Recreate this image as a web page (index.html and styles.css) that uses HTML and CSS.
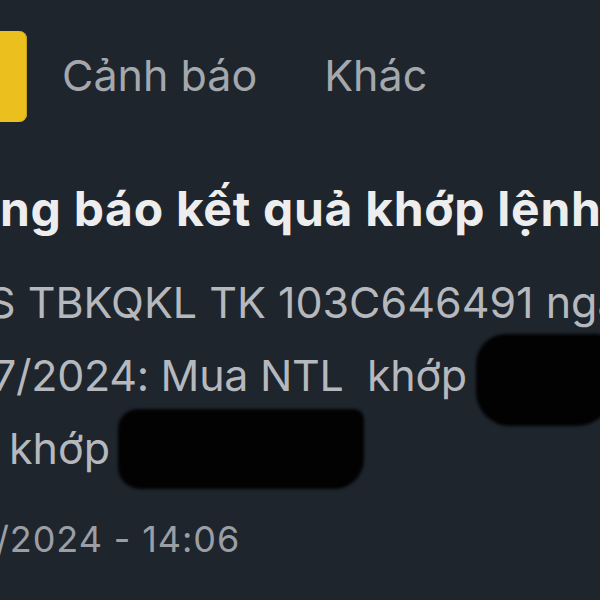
FILE: index.html
```html
<!DOCTYPE html>
<html lang="vi">
<head>
<meta charset="utf-8">
<link rel="stylesheet" href="styles.css">
</head>
<body>
<div class="screen">
  <div class="tabs">
    <div class="tab-active"></div>
    <div class="tab">Cảnh báo</div>
    <div class="tab">Khác</div>
  </div>
  <div class="title">ng báo kết quả khớp lệnh</div>
  <div class="body">
    <div class="line l1">S TBKQKL TK 103C646491 ngày</div>
    <div class="line l2">7/2024: Mua NTL&nbsp; khớp <span class="hidden">9</span></div>
    <div class="line l3">khớp <span class="hidden">9</span></div>
    <div class="blob b1"></div>
    <div class="blob b2"></div>
  </div>
  <div class="date">/2024 - 14:06</div>
</div>
</body>
</html>
```
FILE: styles.css
```css
html, body {
  margin: 0;
  padding: 0;
  background: #1e252d;
}
.screen {
  width: 600px;
  height: 600px;
  overflow: hidden;
  background: #1e252d;
  font-family: Inter, Roboto, sans-serif;
  position: relative;
}
.tabs {
  display: flex;
  align-items: center;
  margin-top: 31px;
  height: 91px;
}
.tab-active {
  width: 27px;
  height: 91px;
  background: #eabf1e;
  border-radius: 0 8px 8px 0;
  box-shadow: inset -1px 0 0 #c9a21a;
}
.tab {
  font-size: 43px;
  color: #a4a8ad;
  margin-left: 35px;
  margin-top: -3px;
}
.tab + .tab {
  margin-left: 67px;
}
.title {
  margin-top: 59px;
  font-size: 48px;
  line-height: 56px;
  font-weight: 700;
  letter-spacing: 0.7px;
  color: #ededee;
  white-space: nowrap;
}
.body {
  position: relative;
  margin-top: 29px;
  font-size: 43px;
  line-height: 73px;
  color: #b5b8bc;
}
.line {
  white-space: nowrap;
}
.l1 { margin-left: -12px; }
.l2 { margin-left: -8px; letter-spacing: -0.3px; }
.l3 { margin-left: 9px; }
.hidden { color: #6a6d70; }
.blob {
  position: absolute;
  background: #020203;
  filter: blur(1.5px);
}
.b1 {
  left: 476px;
  top: 68px;
  width: 140px;
  height: 92px;
  border-radius: 30px 20px 40px 34px;
}
.b2 {
  left: 118px;
  top: 143px;
  width: 246px;
  height: 80px;
  border-radius: 20px 10px 30px 22px;
}
.date {
  margin-top: 32px;
  margin-left: -4px;
  font-size: 36px;
  line-height: 44px;
  letter-spacing: 0.9px;
  color: #9b9fa5;
  white-space: nowrap;
}
```
